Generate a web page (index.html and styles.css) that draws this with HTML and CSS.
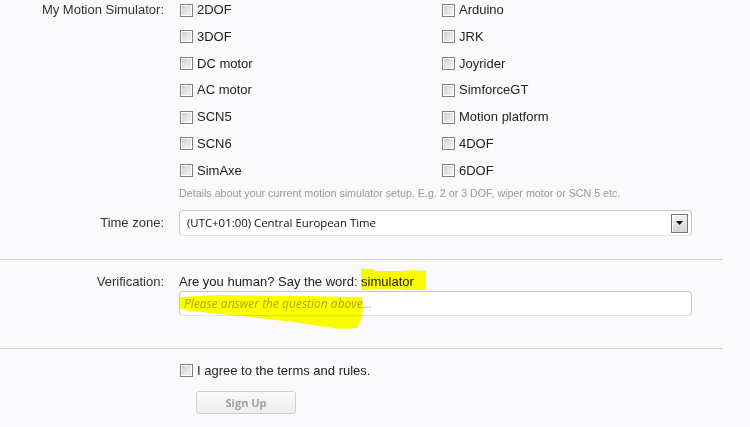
FILE: index.html
```html
<!DOCTYPE html>
<html>
<head>
<meta charset="utf-8">
<link rel="stylesheet" href="styles.css">
</head>
<body>
<form class="form">
  <section class="section section-first">
    <div class="row">
      <div class="row-label">My Motion Simulator:</div>
      <div class="row-field">
        <ul class="checks">
          <li class="check"><input type="checkbox" class="box"><span>2DOF</span></li>
          <li class="check"><input type="checkbox" class="box"><span>3DOF</span></li>
          <li class="check"><input type="checkbox" class="box"><span>DC motor</span></li>
          <li class="check"><input type="checkbox" class="box"><span>AC motor</span></li>
          <li class="check"><input type="checkbox" class="box"><span>SCN5</span></li>
          <li class="check"><input type="checkbox" class="box"><span>SCN6</span></li>
          <li class="check"><input type="checkbox" class="box"><span>SimAxe</span></li>
          <li class="check"><input type="checkbox" class="box"><span>Arduino</span></li>
          <li class="check"><input type="checkbox" class="box"><span>JRK</span></li>
          <li class="check"><input type="checkbox" class="box"><span>Joyrider</span></li>
          <li class="check"><input type="checkbox" class="box"><span>SimforceGT</span></li>
          <li class="check"><input type="checkbox" class="box"><span>Motion platform</span></li>
          <li class="check"><input type="checkbox" class="box"><span>4DOF</span></li>
          <li class="check"><input type="checkbox" class="box"><span>6DOF</span></li>
        </ul>
        <p class="hint">Details about your current motion simulator setup. E.g. 2 or 3 DOF, wiper motor or SCN 5 etc.</p>
      </div>
    </div>
    <div class="row row-tz">
      <div class="row-label row-label-tz">Time zone:</div>
      <div class="row-field">
        <div class="select-wrap">
          <select class="select"><option>(UTC+01:00) Central European Time</option></select>
          <span class="select-arrow"><svg width="7" height="4" viewBox="0 0 7 4"><polygon points="0,0 7,0 3.5,4" fill="#000"/></svg></span>
        </div>
      </div>
    </div>
  </section>

  <section class="section section-verify">
    <div class="row">
      <div class="row-label">Verification:</div>
      <div class="row-field">
        <div class="question">Are you human? Say the word: simulator</div>
        <input type="text" class="text-input" placeholder="Please answer the question above...">
      </div>
    </div>
  </section>

  <section class="section section-submit">
    <div class="row">
      <div class="row-label"></div>
      <div class="row-field">
        <label class="check agree"><input type="checkbox" class="box"><span>I agree to the terms and rules.</span></label>
        <button type="button" class="button">Sign Up</button>
      </div>
    </div>
  </section>
</form>

<svg class="highlight" width="750" height="427" viewBox="0 0 750 427">
  <polygon fill="#ffff00" points="361,269 374,269 376,271 400,271 412,270 426,271 426,290 405,290 398,289 380,289 361,290"/>
  <polygon fill="#ffff00" points="180,297 220,295 300,296 362,297 363,310 361,320 357,328 340,329 300,323 260,318 220,314 190,311 180,309"/>
</svg>
</body>
</html>
```

FILE: styles.css
```css
html, body {
  margin: 0;
  padding: 0;
}
body {
  background: #fafafc;
  font-family: "Liberation Sans", Arial, sans-serif;
  font-size: 13px;
  color: #333;
  position: relative;
  width: 750px;
  height: 427px;
  overflow: hidden;
}
.form {
  width: 723px;
}
.section + .section {
  border-top: 1px solid #d4d4d4;
}
.section-first {
  padding-top: 2px;
  padding-bottom: 23px;
}
.section-verify {
  padding-top: 14px;
  padding-bottom: 32px;
}
.section-submit {
  padding-top: 14px;
}
.row {
  display: flex;
  gap: 15px;
}
.row-label {
  width: 164px;
  flex: none;
  text-align: right;
  line-height: 16px;
  color: #333;
}
.row-field {
  flex: 1;
  min-width: 0;
  padding-right: 31px;
}
.checks {
  list-style: none;
  margin: 0;
  padding: 0;
  display: grid;
  grid-template-columns: 262px auto;
  grid-template-rows: repeat(7, 16px);
  grid-auto-flow: column;
  row-gap: 10.8px;
}
.check {
  display: flex;
  align-items: center;
  gap: 4px;
  line-height: 16px;
  padding-left: 1px;
  color: #222;
}
.box {
  -webkit-appearance: none;
  appearance: none;
  margin: 0;
  width: 13px;
  height: 13px;
  flex: none;
  border: 1px solid #808080;
  box-shadow: inset 1px 1px 0 #fff, inset -1px -1px 0 #fff;
  background: linear-gradient(135deg, #c8c8c8 0%, #e4e4e4 50%, #f8f8f8 100%);
  box-sizing: border-box;
}
.hint {
  margin: 7px 0 0;
  font-size: 10.7px;
  line-height: 14px;
  color: #999;
}
.row-tz {
  margin-top: 10px;
}
.row-label-tz {
  line-height: 26px;
}
.select-wrap {
  position: relative;
  height: 26px;
}
.select {
  -webkit-appearance: none;
  appearance: none;
  display: block;
  width: 100%;
  height: 26px;
  margin: 0;
  box-sizing: border-box;
  border: 1px solid #c8c8c8;
  border-bottom-color: #e2e2e2;
  border-radius: 4px;
  background: #fff;
  padding: 0 7px;
  font-family: "Open Sans", "Noto Sans", sans-serif;
  font-size: 11.4px;
  color: #111;
}
.select-arrow {
  position: absolute;
  right: 4px;
  top: 4px;
  width: 17px;
  height: 19px;
  box-sizing: border-box;
  border: 1px solid #777;
  box-shadow: inset 1px 1px 0 #fff;
  background: linear-gradient(#f2f2f2, #d6d6d6);
  display: flex;
  align-items: center;
  justify-content: center;
}
.question {
  line-height: 16px;
  color: #222;
}
.text-input {
  display: block;
  width: 100%;
  height: 25px;
  margin: 1px 0 0;
  box-sizing: border-box;
  border: 1px solid #c8c8c8;
  border-bottom-color: #e2e2e2;
  border-radius: 4px;
  background: #fff;
  padding: 0 4px;
  font-family: "Open Sans", "Noto Sans", sans-serif;
  font-size: 12px;
}
.text-input::placeholder {
  color: #aaa;
  font-style: italic;
}
.agree {
  padding-left: 1px;
}
.button {
  display: block;
  margin: 12px 0 0 17px;
  width: 100px;
  height: 23px;
  box-sizing: border-box;
  border: 1px solid #cfcfcf;
  border-radius: 3px;
  background: linear-gradient(#fafafa, #ececec);
  font-family: "Open Sans", "Noto Sans", sans-serif;
  font-size: 11px;
  font-weight: bold;
  color: #a0a0a0;
  padding: 0;
}
.highlight {
  position: absolute;
  left: 0;
  top: 0;
  pointer-events: none;
  mix-blend-mode: multiply;
}
```
